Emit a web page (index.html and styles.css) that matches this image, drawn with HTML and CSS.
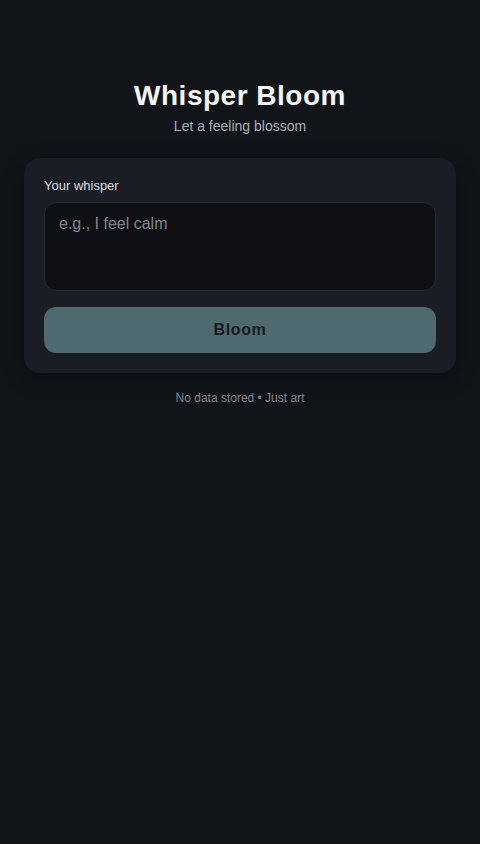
FILE: index.html
```html
<!DOCTYPE html>
<html lang="en">
<head>
    <meta charset="utf-8" />
    <meta name="viewport" content="width=device-width, initial-scale=1" />
    <title>Whisper Bloom</title>
    <link rel="stylesheet" href="styles.css">
</head>
<body>
    <main class="app">
        <header class="head">
            <h1 class="title">Whisper Bloom</h1>
            <p class="subtitle">Let a feeling blossom</p>
        </header>

        <section class="card">
            <label class="label" for="whisper">Your whisper</label>
            <textarea id="whisper" class="whisper" placeholder="e.g., I feel calm"></textarea>
            <button class="bloom" disabled>Bloom</button>
        </section>

        <p class="foot">No data stored &bull; Just art</p>
    </main>
</body>
</html>
```

FILE: styles.css
```css
* {
    box-sizing: border-box;
}

html, body {
    margin: 0;
    height: 100%;
}

body {
    background: #111418;
    color: #e8eaee;
    font-family: "Liberation Sans", Arial, sans-serif;
}

.app {
    max-width: 480px;
    margin: 0 auto;
    padding: 78px 24px 24px;
}

.head {
    text-align: center;
    margin-bottom: 22px;
}

.title {
    margin: 0;
    font-size: 28px;
    line-height: 36px;
    font-weight: 700;
    letter-spacing: 0.5px;
    color: #f2f4f7;
}

.subtitle {
    margin: 2px 0 0;
    font-size: 14px;
    line-height: 20px;
    color: #a9afb9;
}

.card {
    display: flex;
    flex-direction: column;
    background: #1a1d24;
    border-radius: 16px;
    padding: 20px;
    box-shadow: 0 6px 20px rgba(0, 0, 0, 0.35);
}

.label {
    font-size: 13px;
    line-height: 16px;
    color: #d9dde3;
    margin-bottom: 8px;
}

.whisper {
    height: 89px;
    resize: none;
    background: #0e1014;
    border: 1px solid #262a33;
    border-radius: 12px;
    padding: 11px 14px;
    font-family: inherit;
    font-size: 16px;
    line-height: 20px;
    color: #e8eaee;
    outline: none;
}

.whisper::placeholder {
    color: #80858d;
}

.bloom {
    margin-top: 16px;
    height: 46px;
    border: 0;
    border-radius: 12px;
    background: #4e6a6e;
    color: #141b21;
    font-family: inherit;
    font-size: 16px;
    font-weight: 700;
    letter-spacing: 0.6px;
}

.foot {
    margin: 17px 0 0;
    text-align: center;
    font-size: 12px;
    line-height: 16px;
    color: #80858d;
}
```
